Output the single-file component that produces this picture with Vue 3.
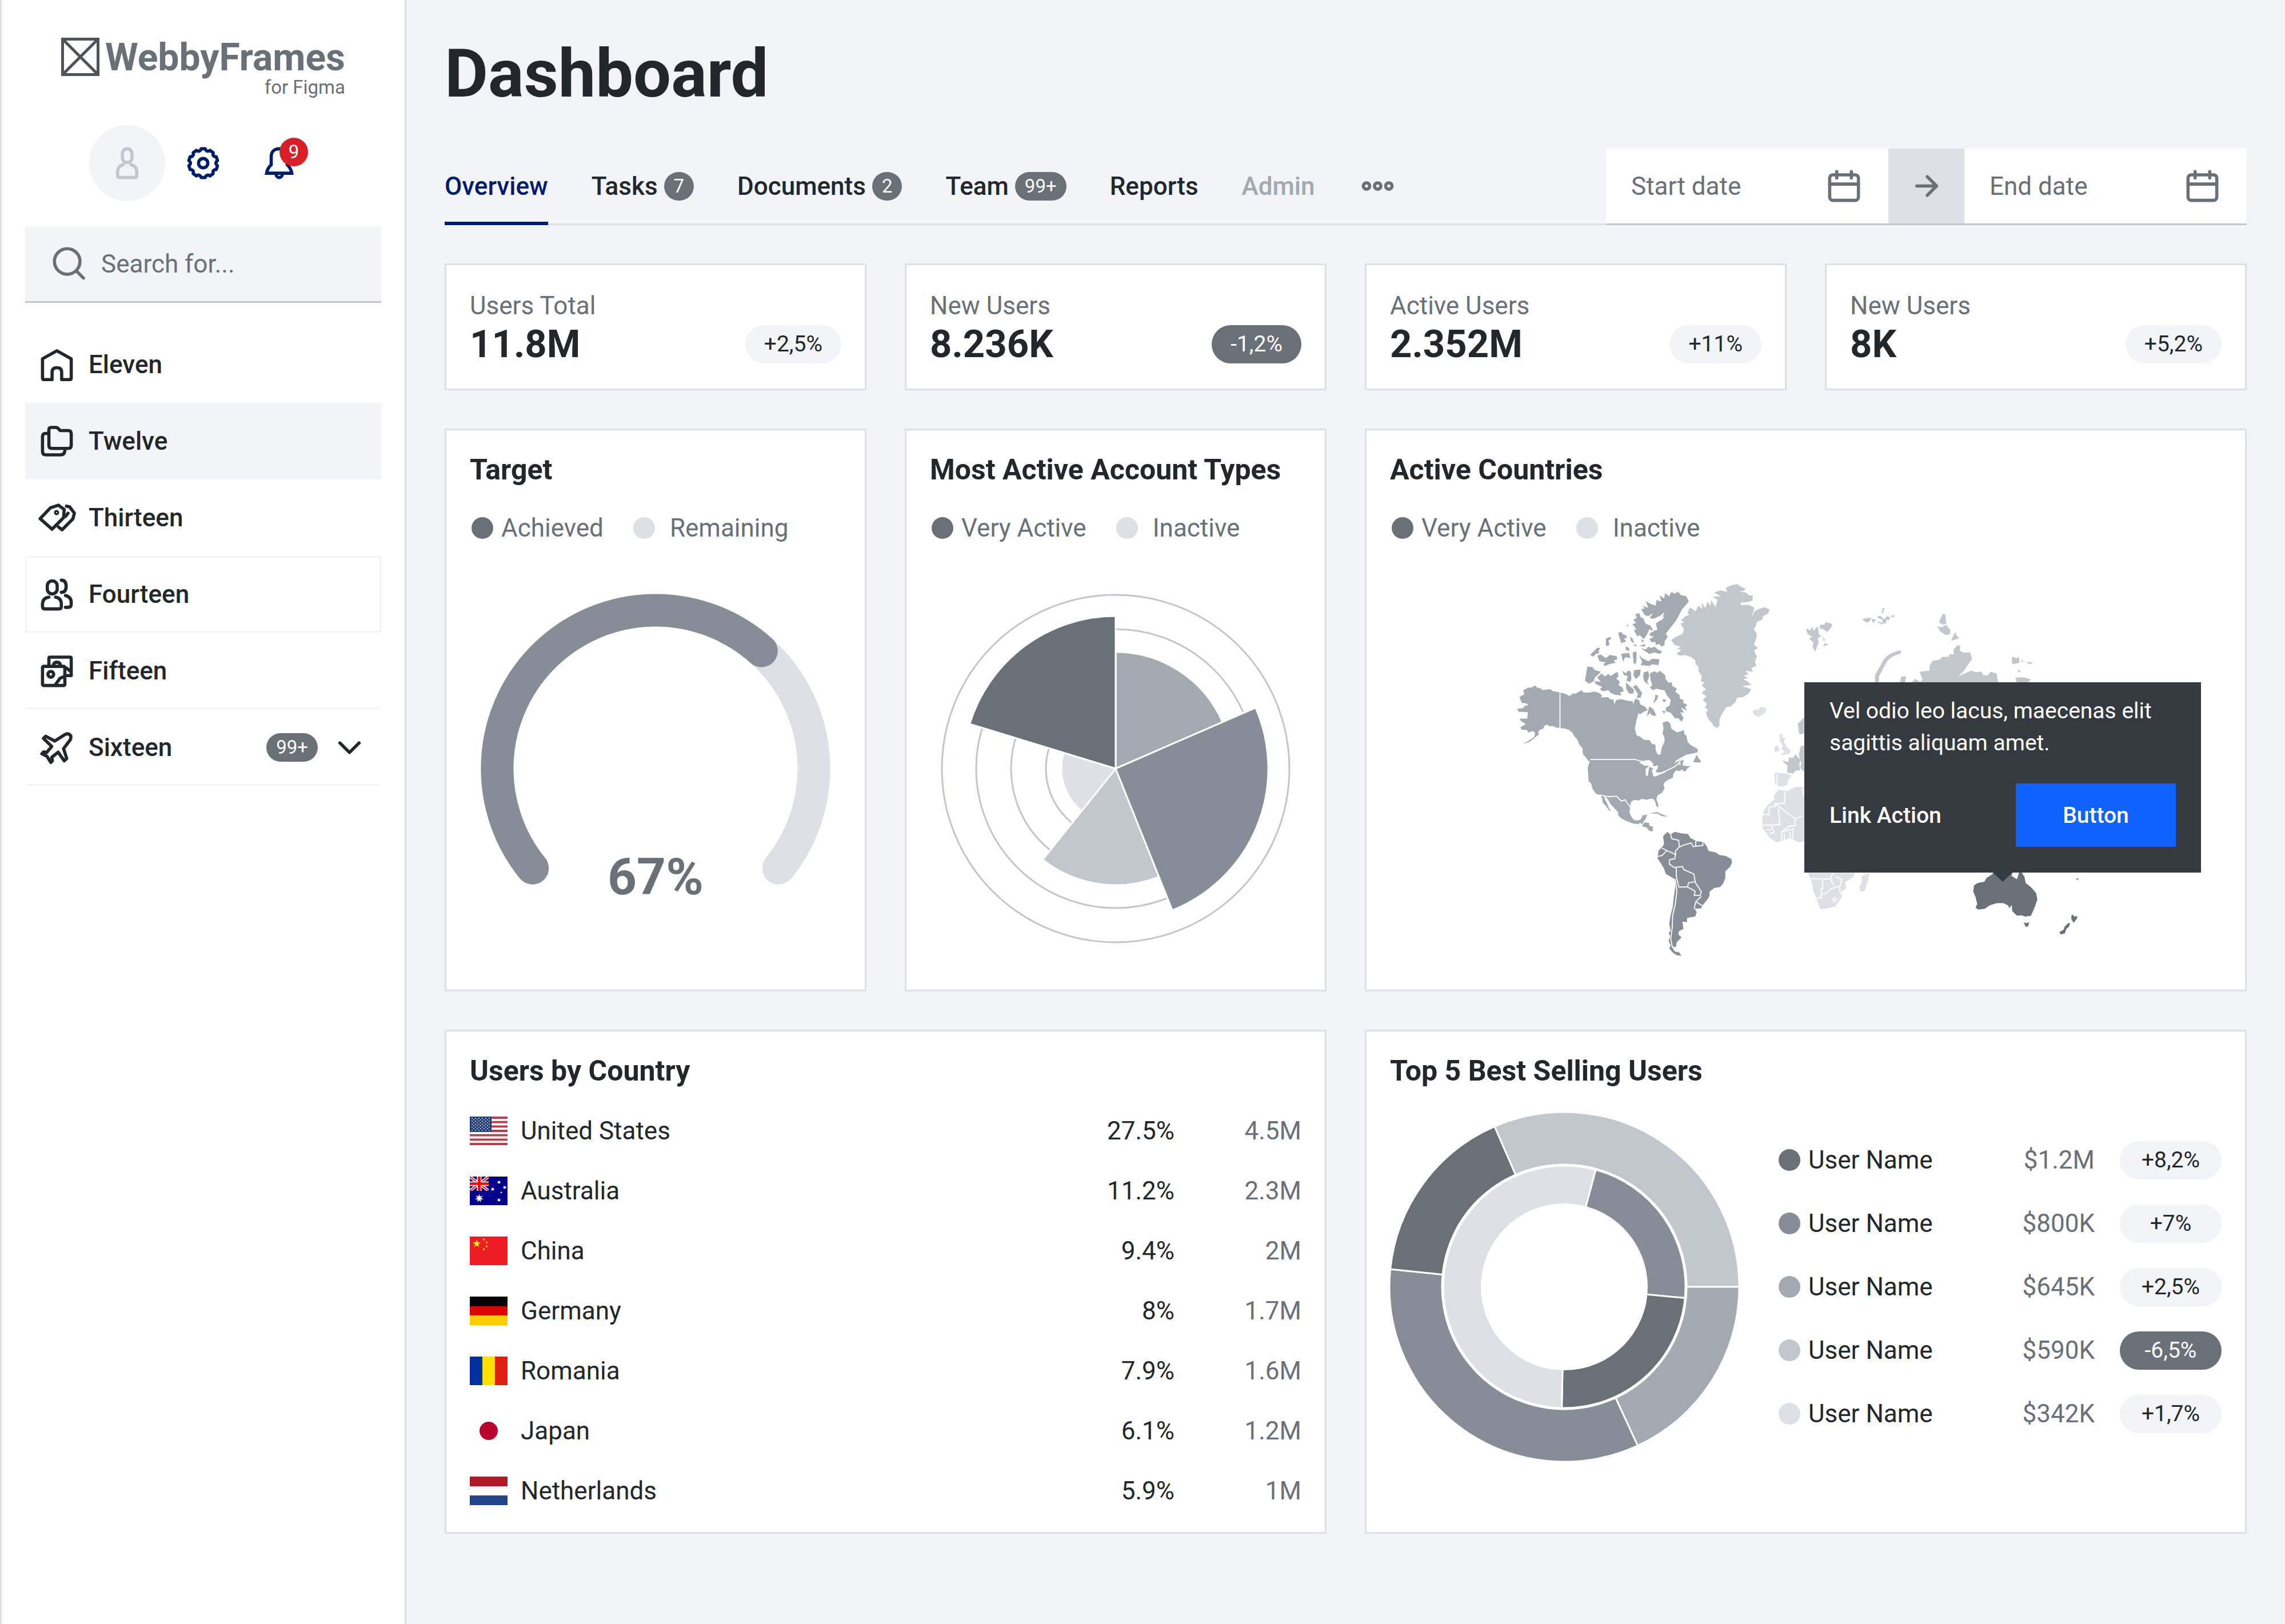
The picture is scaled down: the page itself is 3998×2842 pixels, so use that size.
<script setup>
const navItems = [
  { label: 'Eleven', icon: 'home' },
  { label: 'Twelve', icon: 'folders', state: 'active' },
  { label: 'Thirteen', icon: 'tags' },
  { label: 'Fourteen', icon: 'people', state: 'outlined' },
  { label: 'Fifteen', icon: 'images', state: 'ruled' },
  { label: 'Sixteen', icon: 'plane', state: 'ruled', badge: '99+', expandable: true },
]

const tabs = [
  { label: 'Overview', state: 'current' },
  { label: 'Tasks', badge: '7' },
  { label: 'Documents', badge: '2' },
  { label: 'Team', badge: '99+' },
  { label: 'Reports' },
  { label: 'Admin', state: 'disabled' },
]

const dates = [
  { id: 'start-date', label: 'Start date' },
  { id: 'end-date', label: 'End date' },
]

const stats = [
  { label: 'Users Total', value: '11.8M', change: '+2,5%' },
  { label: 'New Users', value: '8.236K', change: '-1,2%', down: true },
  { label: 'Active Users', value: '2.352M', change: '+11%' },
  { label: 'New Users', value: '8K', change: '+5,2%' },
]

const countries = [
  { name: 'United States', flag: 'us', share: '27.5%', users: '4.5M' },
  { name: 'Australia', flag: 'au', share: '11.2%', users: '2.3M' },
  { name: 'China', flag: 'cn', share: '9.4%', users: '2M' },
  { name: 'Germany', flag: 'de', share: '8%', users: '1.7M' },
  { name: 'Romania', flag: 'ro', share: '7.9%', users: '1.6M' },
  { name: 'Japan', flag: 'jp', share: '6.1%', users: '1.2M' },
  { name: 'Netherlands', flag: 'nl', share: '5.9%', users: '1M' },
]

const sellers = [
  { color: '#697077', amount: '$1.2M', change: '+8,2%' },
  { color: '#878d96', amount: '$800K', change: '+7%' },
  { color: '#a2a9b0', amount: '$645K', change: '+2,5%' },
  { color: '#c1c7cd', amount: '$590K', change: '-6,5%', down: true },
  { color: '#dde1e6', amount: '$342K', change: '+1,7%' },
]

// Angles are in degrees, clockwise from twelve o'clock.
function point(cx, cy, r, deg) {
  const a = ((deg - 90) * Math.PI) / 180
  return `${(cx + r * Math.cos(a)).toFixed(1)} ${(cy + r * Math.sin(a)).toFixed(1)}`
}
function wedge(c, r, from, to) {
  const large = to - from > 180 ? 1 : 0
  return `M${c} ${c}L${point(c, c, r, from)}A${r} ${r} 0 ${large} 1 ${point(c, c, r, to)}Z`
}
function arc(c, r, from, to) {
  const large = to - from > 180 ? 1 : 0
  return `M${point(c, c, r, from)}A${r} ${r} 0 ${large} 1 ${point(c, c, r, to)}`
}

const polar = [
  { r: 204, from: 0, to: 66.5, color: '#a2a9b0' },
  { r: 204, from: 158.2, to: 218.7, color: '#c1c7cd' },
  { r: 95, from: 218.7, to: 287, color: '#dde1e6' },
  { r: 267, from: 287, to: 360, color: '#697077' },
  { r: 267, from: 66.5, to: 158.2, color: '#878d96' },
]
const outerRing = [
  { from: -23.5, to: 90, color: '#c1c7cd' },
  { from: 90, to: 155.2, color: '#a2a9b0' },
  { from: 155.2, to: 275.8, color: '#878d96' },
  { from: 275.8, to: 336.5, color: '#697077' },
]
const innerRing = [
  { from: 15, to: 95.3, color: '#878d96' },
  { from: 95.3, to: 181.2, color: '#697077' },
  { from: 181.2, to: 375, color: '#dde1e6' },
]

let gear = ''
for (let i = 0; i < 10; i++) {
  const a = i * 36
  gear += `${i ? 'L' : 'M'}${point(12, 12, 9.1, a - 8)}L${point(12, 12, 9.1, a + 8)}Q${point(12, 12, 6.9, a + 18)} ${point(12, 12, 9.1, a + 28)}`
}
gear += 'Z'

function star(cx, cy, r, tips, inner) {
  const out = []
  for (let i = 0; i < tips * 2; i++) out.push(point(cx, cy, i % 2 ? r * inner : r, (i * 180) / tips))
  return `M${out.join('L')}Z`
}
const usStars = []
for (let row = 0; row < 9; row++) {
  for (let col = 0; col < (row % 2 ? 5 : 6); col++) {
    usStars.push({ x: 4 + col * 6 + (row % 2 ? 3 : 0), y: 3 + row * 2.6 })
  }
}
</script>

<template>
  <div class="app">
    <aside class="sidebar">
      <div class="brand">
        <svg class="brand-mark" viewBox="0 0 67 67" aria-hidden="true">
          <path d="M2.5 2.5h62v62h-62zM4 4l59 59M63 4L4 63" />
        </svg>
        <div class="brand-text">
          <span class="brand-name">WebbyFrames</span>
          <span class="brand-sub">for Figma</span>
        </div>
      </div>

      <div class="quick">
        <button class="quick-item avatar" type="button" aria-label="Profile">
          <svg class="icon" viewBox="0 0 24 24"><rect x="9" y="3" width="6" height="8.6" rx="3" /><path d="M9.6 12.9Q6 14 6 17.6V19.6Q6 21 7.4 21H16.6Q18 21 18 19.6V17.6Q18 14 14.4 12.9" /></svg>
        </button>
        <button class="quick-item" type="button" aria-label="Settings">
          <svg class="icon" viewBox="0 0 24 24"><path :d="gear" /><circle cx="12" cy="12" r="2.9" /></svg>
        </button>
        <button class="quick-item" type="button" aria-label="Notifications">
          <svg class="icon" viewBox="0 0 24 24"><path d="M12 3C8.8 3 7 5 7 8V13Q4.6 15.2 4.1 18.3H19.9Q19.4 15.2 17 13V8C17 5 15.2 3 12 3Z" stroke-linejoin="miter" /><path d="M10 18.8a2 2.2 0 0 0 4 0" /></svg>
          <span class="alert">9</span>
        </button>
      </div>

      <label class="search">
        <svg class="icon" viewBox="0 0 24 24" aria-hidden="true"><circle cx="10.6" cy="10.6" r="8" /><path d="M16.4 16.6L20.8 21" /></svg>
        <input type="search" placeholder="Search for..." aria-label="Search" />
      </label>

      <nav class="nav">
        <a v-for="item in navItems" :key="item.label" href="#" class="nav-item" :class="item.state">
          <svg class="icon" viewBox="0 0 24 24" aria-hidden="true">
            <path v-if="item.icon === 'home'" d="M3 8.2L12 3.2L21 8.2V20.2Q21 21.2 20 21.2H15V16.6Q15 13.8 12 13.8T9 16.6V21.2H4Q3 21.2 3 20.2Z" />
            <template v-else-if="item.icon === 'folders'">
              <path d="M7 4.6Q7 3.2 8.4 3.2H11.2Q12.4 3.2 13.2 4.2L14 5.2H19Q21 5.2 21 7.2V14.4Q21 16.4 19 16.4H9Q7 16.4 7 14.4Z" />
              <path d="M6 7H5Q3 7 3 9V18.4Q3 20.4 5 20.4H14.4Q16.6 20.4 17 18" />
            </template>
            <template v-else-if="item.icon === 'tags'">
              <path d="M1.5 12.4L8 5.6L13 4L16.6 6.6L16.2 11.8L9 19Z" />
              <path d="M18 4.6L20 5L23 9L22 12.6L15.2 19.4L13 17.6M19 9L17.4 11" />
              <circle cx="11.8" cy="8.6" r=".6" />
            </template>
            <template v-else-if="item.icon === 'people'">
              <rect x="6" y="3.4" width="6.2" height="8.2" rx="3.1" />
              <path d="M7 13.6Q3 14.2 3 18V19.4Q3 21 4.6 21H13.2Q14.8 21 14.8 19.4V18Q14.8 14.2 11.2 13.6" />
              <path d="M14.8 3Q17.8 3 17.8 6.8T14.8 10.6M17.4 12.6Q21 13.4 21 17V18Q21 20 19 20H17.4" />
            </template>
            <template v-else-if="item.icon === 'images'">
              <rect x="3" y="9" width="14" height="12" rx=".8" />
              <path d="M7 9V4Q7 3.2 7.8 3.2H20.2Q21 3.2 21 4V14.8H17.4M9.8 8.6Q10 6.4 12 6.4T14.4 8.6M17.4 10H18L20.8 12.4M11 20.6L14 16.4L16.6 15.4" />
              <circle cx="8.2" cy="14" r="1.8" />
            </template>
            <path v-else d="M10.6 7.8L5 4.8L3.6 6.2L8.8 11.2L5.6 15L3.8 14.6L2.6 15.8L5.8 17.4L8.2 21.2L9.2 20.2L8.8 18L12.8 14.8L16.6 20.2L18.2 18.8L16.2 12.6L20.4 7Q21.4 4.8 20 3.8T17 3.8Z" />
          </svg>
          <span class="nav-label">{{ item.label }}</span>
          <span v-if="item.badge" class="badge">{{ item.badge }}</span>
          <svg v-if="item.expandable" class="icon" viewBox="0 0 24 24" aria-hidden="true"><path d="M6 9L12 15L18 9" /></svg>
        </a>
      </nav>
    </aside>

    <main class="main">
      <h1>Dashboard</h1>

      <div class="toolbar">
        <nav class="tabs">
          <a v-for="tab in tabs" :key="tab.label" href="#" class="tab" :class="tab.state">
            {{ tab.label }}<span v-if="tab.badge" class="badge">{{ tab.badge }}</span>
          </a>
          <button class="more" type="button" aria-label="More">
            <svg class="icon" viewBox="0 0 24 24"><circle cx="5" cy="12" r="2" /><circle cx="12" cy="12" r="2" /><circle cx="19" cy="12" r="2" /></svg>
          </button>
        </nav>
        <div class="dates">
          <template v-for="(date, i) in dates" :key="date.id">
            <span v-if="i" class="date-arrow">
              <svg class="icon" viewBox="0 0 24 24" aria-hidden="true"><path d="M6 12H18M12.6 6.2L18.4 12L12.6 17.8" /></svg>
            </span>
            <label class="date">
              <input :id="date.id" type="text" :placeholder="date.label" :aria-label="date.label" />
              <svg class="icon" viewBox="0 0 24 24" aria-hidden="true"><rect x="3" y="5" width="18" height="16" rx="2" /><path d="M3 10.8H21M7.4 3V7M16.6 3V7" /></svg>
            </label>
          </template>
        </div>
      </div>

      <div class="grid">
        <section v-for="(stat, i) in stats" :key="i" class="card stat">
          <span class="stat-label">{{ stat.label }}</span>
          <div class="stat-row">
            <strong class="stat-value">{{ stat.value }}</strong>
            <span class="pill" :class="{ down: stat.down }">{{ stat.change }}</span>
          </div>
        </section>

        <section class="card">
          <h2>Target</h2>
          <div class="legend">
            <span class="dot dark"></span><span class="legend-first">Achieved</span>
            <span class="dot light"></span><span class="legend-second">Remaining</span>
          </div>
          <svg class="chart" viewBox="0 0 612 612" role="img" aria-label="67% achieved">
            <g fill="none" stroke-width="57" stroke-linecap="round">
              <path :d="arc(306, 277, 42, 129)" stroke="#dde1e6" />
              <path :d="arc(306, 277, -129, 42)" stroke="#878d96" />
            </g>
            <text x="306" y="526" text-anchor="middle">67%</text>
          </svg>
        </section>

        <section class="card">
          <h2>Most Active Account Types</h2>
          <div class="legend">
            <span class="dot dark"></span><span class="legend-first">Very Active</span>
            <span class="dot light"></span><span class="legend-second">Inactive</span>
          </div>
          <svg class="chart" viewBox="0 0 612 612" role="img" aria-label="Account types">
            <g fill="none" stroke="#c1c7cd" stroke-width="3">
              <circle cx="306" cy="306" r="304" /><circle cx="306" cy="306" r="244" /><circle cx="306" cy="306" r="183" /><circle cx="306" cy="306" r="122" />
            </g>
            <g stroke="#fff" stroke-width="3">
              <path v-for="(s, i) in polar" :key="i" :d="wedge(306, s.r, s.from, s.to)" :fill="s.color" />
            </g>
          </svg>
        </section>

        <section class="card wide">
          <h2>Active Countries</h2>
          <div class="legend">
            <span class="dot dark"></span><span class="legend-first">Very Active</span>
            <span class="dot light"></span><span class="legend-second">Inactive</span>
          </div>
          <div class="map">
            <svg class="map-art" viewBox="2432 956 1455 734" role="img" aria-label="World map">
              <g transform="translate(2600 980) scale(.4464 .4592)">
                <g fill="#a2a9b0">
                  <path d="M131 520L150 510 146 495 165 484 180 484 192 476 200 484 215 487 222 494 252 490 262 498 290 502 310 508 328 516 342 506 350 508 375 494 382 503 405 503 425 499 445 505 455 515 450 522 478 520 486 528 500 530 503 548 510 532 530 528 560 535 575 536 577 548 585 526 600 532 605 548 622 556 634 570 618 576 605 586 598 582 590 608 583 640 590 666 605 672 620 684 640 684 650 698 664 702 665 722 672 738 684 740 688 715 700 690 699 672 692 660 696 640 692 618 710 612 722 620 726 640 748 655 765 650 775 645 778 662 786 668 790 690 800 702 815 710 830 718 830 730 812 735 785 740 765 750 745 762 735 775 748 766 775 760 770 780 790 784 802 782 778 802 770 795 760 802 745 800 735 812 732 828 715 835 700 845 696 855 700 868 690 885 672 895 668 910 675 928 675 942 668 936 663 918 655 908 640 908 632 912 610 908 600 914 580 912 568 920 565 940 562 960 572 980 582 990 598 990 608 985 613 972 632 968 626 984 618 994 625 998 640 1000 640 1010 655 1014 653 1032 640 1030 630 1018 612 1012 606 1004 580 1003 565 998 548 992 530 982 518 970 518 960 500 940 488 928 478 910 462 895 466 910 476 928 482 944 489 952 484 954 470 936 458 922 456 910 450 895 430 888 418 870 412 850 402 840 399 790 404 772 409 768 400 762 392 750 380 738 378 715 365 700 358 682 345 668 338 655 325 645 310 640 290 638 272 636 262 630 250 632 240 625 228 630 225 640 210 645 204 656 208 662 190 676 172 690 145 700 168 686 190 672 192 655 182 650 165 655 160 645 140 645 135 635 156 624 135 610 132 602 162 602 164 578 128 576 122 565 148 562 150 553 165 552 160 545 140 542Z" />
                  <path d="M608 185L622 182 614 172 636 180 626 154 645 165 665 172 668 150 688 156 680 132 698 145 702 124 718 136 726 120 740 126 752 118 764 132 785 136 795 156 768 186 750 220 738 238 718 262 705 278 712 290 700 308 700 322 688 328 680 318 665 322 664 310 650 312 640 300 658 290 640 285 645 275 660 270 640 262 632 280 618 300 604 285 592 288 580 265 590 262 574 242 588 238 578 225 592 218 585 205 600 200 606 215 618 222 625 240 645 248 655 268 672 264 666 240 690 222 700 196 680 212 655 222 642 218 655 200 636 212 622 208Z" />
                  <path d="M608 335L628 338 636 328 648 334 660 328 672 338 690 346 682 356 660 350 640 356 625 346ZM600 360L612 372 636 384 652 374 680 376 676 398 650 396 640 402 606 398 612 386ZM575 350L590 346 590 378 586 396 578 390ZM408 360L436 332 448 334 440 346 445 352 430 356 420 366ZM436 362L450 358 470 372 485 360 512 364 515 376 500 380 508 390 485 394 465 402 460 394 470 388 445 384ZM518 275L530 272 536 280 550 286 552 294 540 298 550 308 530 314 524 296ZM470 298L488 290 490 300 480 304 484 322 470 326ZM548 328L560 332 562 345 548 340ZM565 290L575 298 580 316 568 306ZM530 355L562 352 565 372 545 368 538 386ZM600 325L625 318 622 328ZM575 320L592 322 588 328ZM608 300L620 306 612 312ZM552 244L560 248 555 252Z" />
                  <path d="M397 404L418 406 424 416 450 424 438 436 426 446 424 458 404 470 388 458ZM436 446L454 430 466 442 480 432 488 440 515 424 520 440 510 450 524 460 520 476 535 484 540 498 526 502 530 514 508 512 490 505 480 494 458 498 446 490 456 482 430 470 425 460 450 462ZM535 420L548 430 558 418 568 424 570 450 566 462 550 458 556 440 540 436ZM580 418L606 415 604 436 588 452 578 438ZM548 464L566 480 580 492 578 506 562 508 550 490ZM576 480L590 474 612 505 606 522 590 524 596 508ZM618 425L636 422 640 440 632 462 640 474 622 462 616 445ZM642 430L660 422 672 428 680 420 702 436 704 452 716 466 728 464 730 478 748 488 742 500 758 512 760 526 775 532 772 542 790 550 780 558 788 572 764 560 776 580 762 578 774 600 768 614 752 600 742 602 724 580 706 574 704 562 720 552 724 530 710 515 700 495 684 492 668 488 655 494 642 484 652 474 646 458ZM640 556L656 566 668 592 650 590 644 580 630 594ZM664 510L675 515 670 530 655 545 662 525ZM692 528L706 530 704 538 694 538ZM690 572L704 574 698 584ZM812 768L826 740 832 752 842 764 840 770ZM768 798L790 796 778 804ZM640 964L670 958 712 976 690 974 672 964Z" />
                </g>
                <g fill="#c1c7cd">
                  <path d="M726 303L742 292 770 280 776 262 762 240 778 236 764 228 782 212 796 208 790 198 800 178 822 194 832 172 848 184 844 160 860 180 868 156 880 172 882 150 900 178 908 150 888 138 920 136 894 122 920 114 945 120 940 104 960 94 985 90 1000 100 1018 106 1010 116 990 118 1020 122 1028 132 1046 134 1044 152 1026 158 998 160 1000 170 1030 168 1052 180 1040 218 1052 194 1070 184 1092 178 1112 186 1105 202 1086 212 1084 224 1062 234 1056 252 1050 262 1062 280 1058 300 1050 320 1066 334 1050 342 1062 366 1054 386 1060 400 1040 410 1046 424 1016 420 1030 434 1010 438 1028 448 1008 452 1024 460 1040 474 1002 478 1040 490 1028 508 1008 520 985 522 978 538 960 556 942 558 928 580 915 604 915 630 905 638 890 628 886 618 875 610 868 594 862 582 870 568 858 560 866 546 850 530 864 518 846 504 862 490 846 476 856 464 842 460 846 440 834 424 832 402 822 396 820 380 804 368 780 360 760 362 746 356 766 340 748 336 764 330 738 320Z" />
                  <path d="M1255 258L1270 266 1278 252 1284 268 1300 250 1306 284 1318 285 1300 296 1304 310 1290 348 1280 328 1284 312 1266 298 1278 290 1260 280ZM1310 244L1325 245 1332 234 1358 242 1352 256 1338 272 1320 260 1308 258ZM1318 288L1328 300 1326 312 1342 322 1322 326 1328 316ZM1480 220L1500 222 1490 236ZM1510 222L1530 225 1518 238ZM1535 210L1552 214 1545 220ZM1552 184L1562 180 1558 196ZM1552 225L1568 220V240L1556 238ZM1535 234L1548 232 1540 240Z" />
                  <path d="M1160 762L1185 768 1188 750 1204 752 1212 738 1234 760 1228 775 1232 800 1215 800 1204 812 1180 808 1182 782ZM1222 622L1247 598V660L1228 662ZM1234 708L1247 704V805L1232 790 1236 770 1226 740Z" />
                </g>
                <g fill="#878d96">
                  <path d="M694 1050L712 1034 722 1044 740 1034 768 1040 792 1042 800 1056 825 1070 852 1072 866 1090 872 1106 900 1112 915 1122 940 1126 962 1138 964 1152 956 1168 938 1184 938 1210 930 1230 918 1244 894 1248 876 1262 876 1278 866 1294 852 1310 842 1326 818 1326 826 1340 820 1356 788 1362 788 1378 770 1376 774 1404 756 1412 754 1424 766 1436 748 1454 744 1474 730 1474 740 1490 756 1492 766 1506 748 1504 732 1494 718 1478 724 1466 716 1450 722 1432 716 1420 724 1410 718 1385 724 1350 732 1320 736 1284 742 1240 740 1214 705 1194 696 1170 672 1134 676 1106 690 1092 698 1080Z" />
                </g>
                <g fill="#dde1e6">
                  <path d="M1046 574L1058 566 1066 570 1076 558 1096 562 1098 574 1088 586 1068 596 1050 588ZM1150 664L1162 660 1160 672 1172 676 1168 692 1180 712 1194 722 1190 736 1156 742 1170 728 1158 718 1164 706 1152 690ZM1130 712L1144 704 1148 724 1132 730ZM1130 808L1178 812 1198 820 1184 838 1180 856 1158 862 1146 858 1134 854ZM1146 874L1180 878 1210 864 1247 862V1070L1226 1074 1208 1066 1192 1058 1140 1074 1112 1056 1100 1040 1086 1022 1082 985 1090 950 1110 926 1132 910 1128 896ZM1262 1190H1446L1440 1206 1408 1226 1412 1248 1394 1262 1394 1284 1370 1318 1345 1324 1310 1328 1300 1300 1284 1262 1278 1230ZM1474 1202L1503 1190 1498 1215 1484 1260 1468 1262 1463 1246 1472 1228Z" />
                </g>
                <g class="borders">
                  <path d="M290 500V638M409 758H585L620 768M445 893L482 900 512 898 530 916 545 912 566 940M684 812L740 785 760 768 760 780M602 1000L612 1008 622 992" />
                  <path d="M722 1036L728 1060 755 1066 758 1090 742 1108 744 1120 720 1110 690 1096M758 1092L776 1084 804 1076 812 1090 850 1086 850 1070M822 1070V1090M672 1128L690 1124 708 1106M742 1120L740 1136 720 1140 718 1156 738 1170 770 1166 776 1178 815 1195 820 1224 794 1228 790 1244 756 1244 746 1204 746 1170M742 1214L748 1260 742 1310 732 1350 730 1400 724 1440 730 1472 745 1476M790 1244L820 1260 816 1276 840 1276 844 1262 820 1226M844 1280L822 1300 850 1316M822 1300L816 1328" />
                  <path d="M1142 814L1140 856M1085 968H1110V938H1132V926H1170V892L1176 880M1132 926L1212 985 1240 972M1146 945L1152 1006 1118 1008 1086 1008M1240 866L1246 900M1212 985V1010L1190 1012 1160 1032 1158 1072M1118 1008L1130 1036 1112 1040M1170 1040V1066M1192 1034V1060M1206 1022L1200 1066M1158 1034L1206 1022M1100 1026H1120M1270 1212L1350 1214 1360 1190M1320 1214V1250H1314V1286H1296M1314 1270L1330 1272 1350 1252 1388 1240 1395 1215 1370 1205M1350 1214L1366 1240M1385 1244L1390 1270M1358 1292L1366 1284 1374 1290 1366 1300Z" />
                </g>
                <g fill="#fff">
                  <path d="M600 770L620 762 640 760 655 772 655 784 674 780 672 792 664 806 684 808 704 800 700 808 666 822 656 822 650 800 656 792 640 786 634 822 626 818 626 794 640 782 622 782Z" />
                  <path d="M700 212L640 238 642 243 690 226ZM1000 162L1045 168 1045 174ZM1040 474L1005 486 1036 478Z" />
                </g>
              </g>
              <g transform="translate(3080 1030) scale(.5102 .4082)">
                <path d="M476 270Q438 284 426 312T400 372V400" fill="none" stroke="#c1c7cd" stroke-width="14" stroke-linecap="round" />
                <g fill="#c1c7cd">
                  <path d="M350 130L368 124 380 124 374 140 362 142ZM400 118L414 116 424 130 410 128ZM414 98L424 92 420 104ZM432 116L446 120 440 134 428 130ZM446 116L460 110 458 122ZM410 142L425 146 414 152ZM612 142L626 106 634 108 638 148 625 152ZM606 158L622 164 636 152 652 176 650 194 634 196 618 182ZM654 222L668 184 674 200 682 210 668 216ZM862 290L880 296 888 290 888 316 864 322ZM894 300L904 312 896 312ZM912 312L930 314 934 320 920 320ZM882 344L894 352 886 358ZM874 380L900 378 928 386 918 400H880ZM478 400L484 374 500 374 496 400Z" />
                  <path d="M520 400L530 384 550 398 556 384 546 354 580 350 580 330 590 308 616 302 624 290 645 290 650 278 664 280 662 260 676 240 686 244 684 264 696 272 720 272 726 300 708 330 700 348 678 374 722 350 740 356 758 354 764 368 780 370 790 354 810 362 816 400Z" />
                </g>
                <g fill="#697077">
                  <path d="M730 1296L733 1270 745 1260 768 1254 776 1238 796 1222 800 1214H864L862 1230 880 1244 888 1214H896L906 1234 910 1260 930 1280 946 1304 950 1330 942 1360 928 1400 908 1404 896 1398 880 1400 864 1380 862 1354 854 1368 850 1356 834 1346 810 1346 786 1356 770 1370 748 1374 738 1366 744 1350 738 1320Z" />
                  <path d="M903 1428L912 1432 922 1428 918 1446 910 1448ZM1068 1394L1078 1404 1088 1402 1084 1416 1074 1430 1066 1412ZM1058 1430L1062 1434 1058 1448 1050 1456 1044 1476 1030 1480 1026 1470 1040 1460 1044 1446ZM1084 1240H1090V1245H1084Z" />
                </g>
              </g>
            </svg>
            <div class="popover">
              <p>Vel odio leo lacus, maecenas elit sagittis aliquam amet.</p>
              <div class="popover-actions">
                <a href="#">Link Action</a>
                <button type="button">Button</button>
              </div>
            </div>
          </div>
        </section>

        <section class="card wide lists">
          <h2>Users by Country</h2>
          <table class="countries">
            <tbody>
              <tr v-for="c in countries" :key="c.name">
                <td class="flag-cell">
                  <svg class="flag" viewBox="0 0 66 50" aria-hidden="true">
                    <template v-if="c.flag === 'us'">
                      <rect width="66" height="50" fill="#fff" />
                      <path d="M0 2H66M0 9.7H66M0 17.4H66M0 25H66M0 32.7H66M0 40.4H66M0 48H66" stroke="#bb3d4c" stroke-width="3.8" />
                      <rect width="38" height="27" fill="#233d75" />
                      <circle v-for="(s, i) in usStars" :key="i" :cx="s.x" :cy="s.y" r=".9" fill="#fff" />
                    </template>
                    <template v-else-if="c.flag === 'au'">
                      <rect width="66" height="50" fill="#00008b" />
                      <svg width="33" height="25" viewBox="0 0 33 25">
                        <path d="M0 0L33 25M33 0L0 25" stroke="#fff" stroke-width="5" />
                        <path d="M0 0L33 25M33 0L0 25" stroke="#f00" stroke-width="1.8" />
                        <path d="M16.5 0V25M0 12.5H33" stroke="#fff" stroke-width="8" />
                        <path d="M16.5 0V25M0 12.5H33" stroke="#f00" stroke-width="4.6" />
                      </svg>
                      <path :d="star(16.5, 38, 7.5, 7, 0.45) + star(51, 10, 3.4, 7, 0.5) + star(40, 22, 3.4, 7, 0.5) + star(61, 19, 3.4, 7, 0.5) + star(51, 41, 3.4, 7, 0.5) + star(55, 28, 2, 5, 0.5)" fill="#fff" />
                    </template>
                    <template v-else-if="c.flag === 'cn'">
                      <rect width="66" height="50" fill="#ee1c25" />
                      <path :d="star(12, 12.5, 7.4, 5, 0.38) + star(24.5, 5, 2.6, 5, 0.4) + star(29.5, 10, 2.6, 5, 0.4) + star(29.5, 17, 2.6, 5, 0.4) + star(24.5, 22, 2.6, 5, 0.4)" fill="#ff0" />
                    </template>
                    <template v-else-if="c.flag === 'de'">
                      <rect width="66" height="50" fill="#000" /><rect y="17" width="66" height="33" fill="#d00" /><rect y="33" width="66" height="17" fill="#ffce00" />
                    </template>
                    <template v-else-if="c.flag === 'ro'">
                      <rect width="66" height="50" fill="#00319c" /><rect x="22" width="44" height="50" fill="#ffde00" /><rect x="44" width="22" height="50" fill="#de2110" />
                    </template>
                    <circle v-else-if="c.flag === 'jp'" cx="33" cy="25" r="16" fill="#bc002d" />
                    <template v-else>
                      <rect width="66" height="17" fill="#ae1c28" /><rect y="33" width="66" height="17" fill="#21468b" />
                    </template>
                  </svg>
                </td>
                <th scope="row">{{ c.name }}</th>
                <td class="share">{{ c.share }}</td>
                <td class="users">{{ c.users }}</td>
              </tr>
            </tbody>
          </table>
        </section>

        <section class="card wide lists">
          <h2>Top 5 Best Selling Users</h2>
          <div class="selling">
            <svg class="donut" viewBox="0 0 610 610" role="img" aria-label="Sales by user">
              <g stroke="#fff" stroke-width="3">
                <path v-for="(s, i) in outerRing" :key="i" :d="wedge(305, 306, s.from, s.to)" :fill="s.color" />
                <circle cx="305" cy="305" r="214" fill="#fff" />
                <path v-for="(s, i) in innerRing" :key="i" :d="wedge(305, 212, s.from, s.to)" :fill="s.color" />
              </g>
              <circle cx="305" cy="305" r="146" fill="#fff" />
            </svg>
            <ul class="sellers">
              <li v-for="s in sellers" :key="s.color">
                <span class="dot" :style="{ '--dot': s.color }"></span>
                <span class="seller-name">User Name</span>
                <span class="amount">{{ s.amount }}</span>
                <span class="pill" :class="{ down: s.down }">{{ s.change }}</span>
              </li>
            </ul>
          </div>
        </section>
      </div>
    </main>
  </div>
</template>

<style>
body {
  margin: 0;
  background: #f2f4f8;
}
</style>

<style scoped>
.app {
  display: flex;
  min-height: 100vh;
  background: #f2f4f8;
  color: #21272a;
  font: 400 44px/62px Roboto, sans-serif;
}
.app *,
.app *::before,
.app *::after {
  box-sizing: border-box;
}
a {
  color: inherit;
  text-decoration: none;
}
button,
input {
  padding: 0;
  border: 0;
  background: none;
  color: inherit;
  font: inherit;
}
.icon {
  display: block;
  flex: none;
  width: 67px;
  height: 67px;
  fill: none;
  stroke: currentColor;
  stroke-width: 2;
  stroke-linecap: round;
  stroke-linejoin: round;
}
.badge {
  flex: none;
  min-width: 50px;
  height: 50px;
  padding: 0 17px;
  border-radius: 25px;
  background: #697077;
  color: #fff;
  font-size: 33px;
  font-weight: 400;
  line-height: 50px;
  text-align: center;
}
.pill {
  flex: none;
  padding: 0 33px;
  border-radius: 34px;
  background: #f2f4f8;
  font-size: 39px;
  line-height: 67px;
  text-align: center;
}
.pill.down {
  background: #697077;
  color: #fff;
}

/* Sidebar */
.sidebar {
  flex: none;
  width: 711px;
  padding: 66px 41px;
  border: solid #dde1e6;
  border-width: 0 3px;
  background: #fff;
}
.brand {
  display: flex;
  justify-content: center;
  gap: 10px;
  height: 153px;
}
.brand-mark {
  width: 67px;
  height: 67px;
  fill: none;
  stroke: #4d5358;
  stroke-width: 5;
}
.brand-text {
  display: flex;
  flex-direction: column;
  align-items: flex-end;
  color: #697077;
}
.brand-name {
  font-size: 66px;
  font-weight: 700;
  line-height: 70px;
}
.brand-sub {
  font-size: 33px;
  line-height: 34px;
}
.quick {
  display: flex;
  justify-content: center;
}
.quick-item {
  position: relative;
  display: grid;
  place-items: center;
  width: 133px;
  height: 133px;
  color: #001d6c;
}
.quick-item .icon {
  stroke-linecap: butt;
}
.avatar {
  border-radius: 50%;
  background: #f2f4f8;
  color: #c1c7cd;
}
.quick-item.avatar .icon {
  stroke-linecap: round;
}
.alert {
  position: absolute;
  top: 22px;
  right: 16px;
  width: 50px;
  height: 50px;
  border-radius: 50%;
  background: #da1e28;
  color: #fff;
  font-size: 33px;
  line-height: 50px;
  text-align: center;
}
.search {
  display: flex;
  align-items: center;
  gap: 22px;
  height: 134px;
  margin-top: 44px;
  padding: 0 44px;
  border-bottom: 3px solid #c1c7cd;
  background: #f2f4f8;
  color: #697077;
}
.search input {
  flex: 1;
  min-width: 0;
  outline: 0;
  appearance: none;
}
input::placeholder {
  color: #697077;
  opacity: 1;
}
.nav {
  margin-top: 41px;
}
.nav-item {
  display: flex;
  align-items: center;
  gap: 22px;
  height: 134px;
  padding: 0 19px;
  border: 3px solid transparent;
  font-weight: 500;
}
.nav-item.active {
  background: #f2f4f8;
}
.nav-item.outlined {
  border-color: #f2f4f8;
}
.nav-item.ruled {
  border-bottom-color: #f2f4f8;
}
.nav-label {
  flex: 1;
}

/* Header */
.main {
  flex: 1;
  min-width: 0;
  padding: 62px 67px;
}
h1 {
  margin: 0 0 64px;
  font-size: 117px;
  font-weight: 700;
  line-height: 134px;
}
.toolbar {
  display: flex;
  height: 134px;
  margin-bottom: 67px;
}
.tabs {
  display: flex;
  flex: 1;
  gap: 76px;
  border-bottom: 3px solid #dde1e6;
  font-weight: 500;
}
.tab {
  display: flex;
  align-items: center;
  gap: 11px;
}
.tab.current {
  margin-bottom: -3px;
  border-bottom: 6px solid #001d6c;
  padding-top: 3px;
  color: #001d6c;
}
.tab.disabled {
  color: #a2a9b0;
}
.more {
  color: #697077;
}
.dates {
  display: flex;
  flex: none;
  border-bottom: 3px solid #c1c7cd;
  color: #697077;
}
.date {
  display: flex;
  align-items: center;
  width: 494px;
  padding: 0 44px;
  background: #fff;
}
.date input {
  flex: 1;
  min-width: 0;
  outline: 0;
}
.date-arrow {
  display: grid;
  place-items: center;
  width: 133px;
  background: #dde1e6;
}

/* Cards */
.grid {
  display: grid;
  grid-template-columns: repeat(4, minmax(0, 1fr));
  gap: 67px;
}
.card {
  padding: 41px;
  border: 3px solid #dde1e6;
  background: #fff;
}
.card.lists {
  padding-bottom: 20px;
}
.wide {
  grid-column: span 2;
}
h2 {
  margin: 0;
  font-size: 50px;
  font-weight: 700;
  line-height: 56px;
}
.stat {
  padding: 40px 41px 42px;
}
.stat-label {
  display: block;
  color: #697077;
}
.stat-row {
  display: flex;
  align-items: center;
  justify-content: space-between;
}
.stat-value {
  font-size: 67px;
  font-weight: 700;
  line-height: 72px;
}
.legend {
  display: flex;
  align-items: center;
  height: 66px;
  margin-top: 41px;
  color: #697077;
}
.legend-first {
  margin: 0 49px 0 11px;
}
.legend-second {
  margin-left: 23px;
}
.dot {
  flex: none;
  width: 38px;
  height: 38px;
  margin: 0 3px;
  border-radius: 50%;
  background: var(--dot);
}
.dot.dark {
  --dot: #697077;
}
.dot.light {
  --dot: #dde1e6;
}
.chart {
  display: block;
  width: 100%;
  max-width: 612px;
  margin: 82px auto 40px;
}
.chart text {
  fill: #697077;
  font-size: 89px;
  font-weight: 700;
}

/* Map */
.map {
  position: relative;
}
.map-art {
  display: block;
  width: 100%;
}
.borders {
  fill: none;
  stroke: #fff;
  stroke-width: 4;
}
.popover {
  position: absolute;
  top: 237px;
  right: 36px;
  width: 694px;
  padding: 22px 44px 45px;
  background: #343a3f;
  color: #fff;
  font-size: 39px;
  line-height: 56px;
}
.popover::after {
  content: '';
  position: absolute;
  top: 100%;
  left: 50%;
  border: solid transparent;
  border-width: 16px 17px 0;
  border-top-color: #343a3f;
  translate: -50% 0;
}
.popover p {
  margin: 0 0 43px;
}
.popover-actions {
  display: flex;
  align-items: center;
  justify-content: space-between;
  font-weight: 500;
}
.popover button {
  width: 280px;
  height: 111px;
  background: #0f62fe;
}

/* Country table */
.countries {
  width: 100%;
  margin-top: 24px;
  border-collapse: collapse;
}
.countries td,
.countries th {
  height: 105px;
  padding: 0;
  font-weight: 400;
  text-align: right;
}
.countries .flag-cell {
  width: 89px;
}
.countries th {
  text-align: left;
}
.countries .users {
  width: 222px;
  color: #697077;
}
.flag {
  display: block;
  width: 66px;
  height: 50px;
}

/* Sellers */
.selling {
  display: flex;
  align-items: center;
  gap: 67px;
  margin-top: 45px;
}
.donut {
  display: block;
  flex: none;
  width: 610px;
}
.sellers {
  flex: 1;
  margin: 0;
  padding: 0;
  list-style: none;
}
.sellers li {
  display: flex;
  align-items: center;
  height: 111px;
}
.seller-name {
  flex: 1;
  margin-left: 11px;
}
.amount {
  margin-right: 44px;
  color: #697077;
}
.sellers .pill {
  min-width: 178px;
}
</style>
